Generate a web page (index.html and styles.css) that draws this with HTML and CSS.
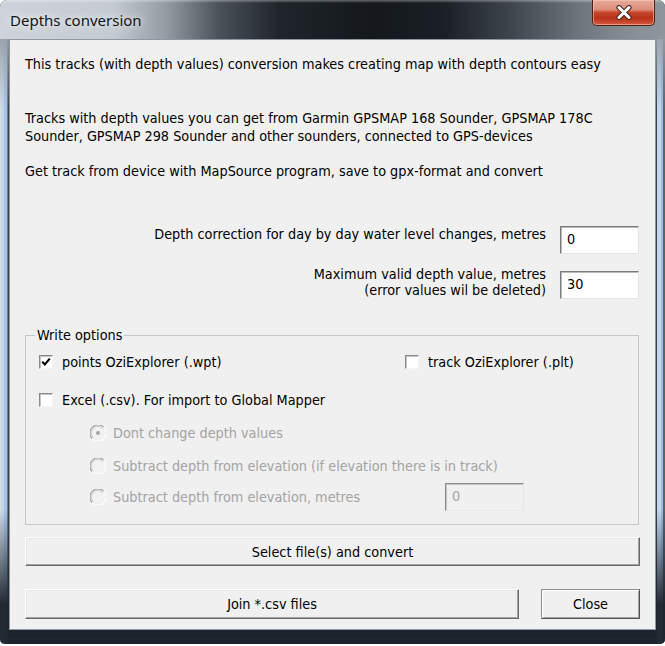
FILE: index.html
```html
<!DOCTYPE html>
<html lang="en">
<head>
<meta charset="utf-8">
<title>Depths conversion</title>
<link rel="stylesheet" href="styles.css">
</head>
<body>
<div class="window">
  <div class="titlebar">
    <span class="title">Depths conversion</span>
    <div class="close-x">
      <svg width="18" height="15" viewBox="0 0 18 15">
        <path d="M4 2.5 L14 12.5 M14 2.5 L4 12.5" stroke="#4a2a24" stroke-width="5.2" stroke-linecap="round"/>
        <path d="M4 2.5 L14 12.5 M14 2.5 L4 12.5" stroke="#ffffff" stroke-width="3" stroke-linecap="round"/>
      </svg>
    </div>
  </div>
  <div class="frame">
    <div class="client">
      <p class="intro">This tracks (with depth values) conversion makes creating map with depth contours easy</p>
      <p class="para2">Tracks with depth values you can get from Garmin GPSMAP 168 Sounder, GPSMAP 178C<br>Sounder, GPSMAP 298 Sounder and other sounders, connected to GPS-devices</p>
      <p class="para3">Get track from device with MapSource program, save to gpx-format and convert</p>

      <div class="field field-1">
        <span class="field-label">Depth correction for day by day water level changes, metres</span>
        <div class="textbox">0</div>
      </div>
      <div class="field field-2">
        <span class="field-label two-line">Maximum valid depth value, metres<br>(error values wil be deleted)</span>
        <div class="textbox">30</div>
      </div>

      <fieldset class="group">
        <legend>Write options</legend>
        <div class="opt-row row-a">
          <span class="check">
            <span class="box"><svg width="12" height="12" viewBox="0 0 12 12"><path d="M2.2 5.6 L4.8 8.4 L9.8 2.6" fill="none" stroke="#000" stroke-width="2.1"/></svg></span>
            points OziExplorer (.wpt)
          </span>
          <span class="check">
            <span class="box"></span>
            track OziExplorer (.plt)
          </span>
        </div>
        <div class="opt-row row-b">
          <span class="check">
            <span class="box"></span>
            Excel (.csv). For import to Global Mapper
          </span>
        </div>
        <div class="opt-row radio-row radio-1">
          <span class="radio">
            <svg class="rad" width="16" height="16" viewBox="0 0 16 16">
              <path d="M2.3 13.7 A7 7 0 0 1 13.7 2.3" fill="none" stroke="#a6a6a6" stroke-width="1.2"/>
              <path d="M13.7 2.3 A7 7 0 0 1 2.3 13.7" fill="none" stroke="#ffffff" stroke-width="1.2"/>
              <circle cx="8" cy="8" r="5.6" fill="#f2f2f2"/>
              <path d="M3.4 12.6 A6.5 6.5 0 0 1 12.6 3.4" fill="none" stroke="#d0d0d0" stroke-width="1"/>
              <circle cx="8" cy="8" r="2" fill="#a6a6a6"/>
            </svg>
            Dont change depth values
          </span>
        </div>
        <div class="opt-row radio-row radio-2">
          <span class="radio">
            <svg class="rad" width="16" height="16" viewBox="0 0 16 16">
              <path d="M2.3 13.7 A7 7 0 0 1 13.7 2.3" fill="none" stroke="#a6a6a6" stroke-width="1.2"/>
              <path d="M13.7 2.3 A7 7 0 0 1 2.3 13.7" fill="none" stroke="#ffffff" stroke-width="1.2"/>
              <circle cx="8" cy="8" r="5.6" fill="#f2f2f2"/>
              <path d="M3.4 12.6 A6.5 6.5 0 0 1 12.6 3.4" fill="none" stroke="#d0d0d0" stroke-width="1"/>
            </svg>
            Subtract depth from elevation (if elevation there is in track)
          </span>
        </div>
        <div class="opt-row radio-row radio-3">
          <span class="radio">
            <svg class="rad" width="16" height="16" viewBox="0 0 16 16">
              <path d="M2.3 13.7 A7 7 0 0 1 13.7 2.3" fill="none" stroke="#a6a6a6" stroke-width="1.2"/>
              <path d="M13.7 2.3 A7 7 0 0 1 2.3 13.7" fill="none" stroke="#ffffff" stroke-width="1.2"/>
              <circle cx="8" cy="8" r="5.6" fill="#f2f2f2"/>
              <path d="M3.4 12.6 A6.5 6.5 0 0 1 12.6 3.4" fill="none" stroke="#d0d0d0" stroke-width="1"/>
            </svg>
            Subtract depth from elevation, metres
          </span>
          <div class="textbox disabled">0</div>
        </div>
      </fieldset>

      <button class="btn btn-wide" type="button">Select file(s) and convert</button>
      <div class="btn-row">
        <button class="btn btn-join" type="button">Join *.csv files</button>
        <button class="btn btn-close" type="button">Close</button>
      </div>
    </div>
  </div>
</div>
</body>
</html>
```

FILE: styles.css
```css
html, body {
  margin: 0;
  padding: 0;
  background: #ffffff;
}

body {
  font-family: "DejaVu Sans Condensed", "DejaVu Sans", sans-serif;
  font-stretch: condensed;
  font-size: 14.3px;
  color: #000;
}

.window {
  width: 665px;
  height: 644px;
  display: flex;
  flex-direction: column;
  border-radius: 7px 7px 5px 5px;
  overflow: hidden;
  background: #222a34;
}

.titlebar {
  height: 39px;
  flex: none;
  display: flex;
  align-items: flex-start;
  background:
    linear-gradient(to bottom, rgba(255,255,255,0.35) 0, rgba(255,255,255,0) 3px),
    linear-gradient(to right,
      #cdd3d9 0%, #c4cbd2 17%, #939ba3 25%, #4a5159 33%,
      #20252b 42%, #14181d 56%, #1b2026 67%, #3f464d 77%,
      #6d757c 87%, #858d94 94%, #8e969d 100%);
}

.title {
  margin: 9px 0 0 10px;
  font-family: "Noto Sans", "Open Sans", sans-serif;
  font-stretch: normal;
  font-size: 15px;
  line-height: 22px;
  color: #141414;
  text-shadow: 0 0 6px rgba(255,255,255,0.9), 0 0 14px rgba(255,255,255,0.7);
}

.close-x {
  margin-left: auto;
  margin-right: 10px;
  width: 63px;
  height: 26px;
  box-sizing: border-box;
  border: 1px solid #4f1e16;
  border-top: none;
  border-radius: 0 0 5px 5px;
  background: linear-gradient(to bottom,
    #e8ab9b 0%, #dc8e7b 38%, #c8472c 50%, #b93219 72%, #d25a3c 100%);
  box-shadow: inset 0 0 0 1px rgba(255, 205, 190, 0.55);
  display: flex;
  align-items: center;
  justify-content: center;
}

.frame {
  flex: 1;
  display: flex;
  padding: 0 9px 14px;
  background:
    linear-gradient(to bottom, rgba(150,158,166,0.9) 0, rgba(150,158,166,0) 70px, rgba(0,0,0,0) 470px, rgba(28,35,44,0.96) 565px),
    linear-gradient(#7f8e9e, #7f8e9e) 0 calc(100% - 4px) / 100% 1px no-repeat,
    linear-gradient(to right, #d3dbe2 0 2px, #c1d7ee 2px 4px, #a6c5e6 4px 7px, #6f7b86 7px 8px, #394049 8px 9px) left top / 9px 100% no-repeat,
    linear-gradient(to right, #394049 0 1px, #c1d7ee 1px 5px, #9dbde2 5px 7px, #59626b 7px 9px) right top / 9px 100% no-repeat,
    #222a34;
}

.client {
  flex: 1;
  display: flex;
  flex-direction: column;
  background: #f0f0f0;
  border: 1px solid #8e98a2;
  padding: 15px 15px 9px;
}

p {
  margin: 0;
  line-height: 18px;
}

.para2 { margin-top: 36px; }
.para3 { margin-top: 17px; }

.field {
  display: flex;
  justify-content: flex-end;
  align-items: flex-start;
  gap: 14px;
  padding-right: 1px;
}

.field-label {
  text-align: right;
  line-height: 18px;
}

.field-label.two-line { line-height: 16px; }

.field-1 { margin-top: 45px; }
.field-1 .textbox { margin-top: 1px; }
.field-2 { margin-top: 12px; }
.field-2 .textbox { margin-top: 5px; }

.textbox {
  width: 79px;
  height: 28px;
  box-sizing: border-box;
  flex: none;
  border: 1px solid;
  border-color: #7b7b7b #e4e4e4 #e4e4e4 #7b7b7b;
  box-shadow: inset 1px 1px 0 #b9b9b9;
  background: #ffffff;
  padding: 0 6px;
  line-height: 25px;
}

.textbox.disabled {
  background: #f0f0f0;
  color: #a3a3a3;
  border-color: #8c8c8c #e8e8e8 #e8e8e8 #8c8c8c;
  box-shadow: inset 1px 1px 0 #c4c4c4;
}

.group {
  margin: 27px 1px 0 0;
  padding: 9px 0 13px 0;
  border: 1px solid #c3c8cd;
  min-width: 0;
}

.group legend {
  margin-left: 9px;
  padding: 0 2px;
  line-height: 18px;
}

.opt-row {
  display: flex;
  align-items: center;
  height: 18px;
  padding-left: 13px;
}

.row-a {
  display: grid;
  grid-template-columns: 366px auto;
  align-items: center;
}

.row-b { margin-top: 20px; }

.check, .radio {
  display: flex;
  align-items: center;
  line-height: 18px;
  white-space: nowrap;
}

.box {
  width: 14px;
  height: 14px;
  box-sizing: border-box;
  flex: none;
  margin-right: 9px;
  border: 1px solid;
  border-color: #8a8a8a #f4f4f4 #f4f4f4 #8a8a8a;
  box-shadow: inset 1px 1px 0 #c4c4c4;
  background: #ffffff;
  display: flex;
  align-items: center;
  justify-content: center;
}

.radio-row {
  padding-left: 64px;
  color: #a3a3a3;
}

.rad {
  flex: none;
  margin-right: 7px;
}

.radio-1 { margin-top: 15px; }
.radio-2 { margin-top: 15px; }

.radio-3 {
  margin-top: 8px;
  height: 28px;
  display: grid;
  grid-template-columns: 355px 79px;
  align-items: center;
}

.btn {
  font: inherit;
  font-stretch: condensed;
  color: #000;
  background: #f0f0f0;
  margin: 0;
  padding: 0;
  box-sizing: border-box;
  border: 1px solid;
  border-color: #ffffff #6a6a6a #6a6a6a #ffffff;
  box-shadow: inset -1px -1px 0 #a3a3a3, inset 1px 1px 0 #e6e6e6;
}

.btn-wide {
  margin-top: 12px;
  height: 29px;
  width: 100%;
}

.btn-row {
  margin-top: 23px;
  height: 30px;
  display: flex;
  gap: 22px;
}

.btn-join { flex: 1; }

.btn-close {
  width: 99px;
  flex: none;
  border-color: #8f8f8f #555555 #555555 #8f8f8f;
  box-shadow: inset 1px 1px 0 #ffffff, inset -1px -1px 0 #a3a3a3;
}
```
